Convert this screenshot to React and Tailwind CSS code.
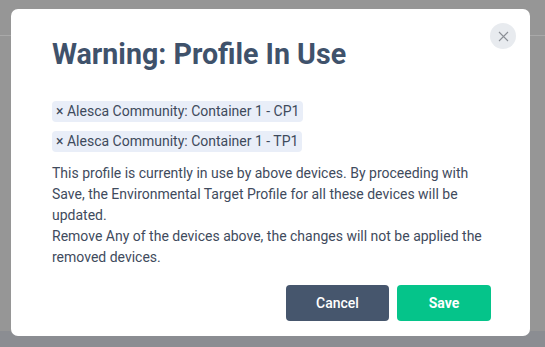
import React from 'react';

const devices = ['Alesca Community: Container 1 - CP1', 'Alesca Community: Container 1 - TP1'];

export default function App() {
  return (
    <div className="relative w-[545px] h-[347px] overflow-hidden bg-[#969696] font-['Roboto',sans-serif]">
      {/* page behind the overlay */}
      <div className="flex flex-col h-full">
        <div className="h-[35px]" />
        <div className="h-px bg-[#a9a9a9]" />
        <div className="flex-1" />
        <div className="h-[16px] bg-[#8b8d92]" />
      </div>

      <div className="absolute left-[11px] top-[9px] w-[519px] h-[327px] bg-white rounded-[7px] pl-[41px] pr-[14px] pt-[14px]">
        <div className="flex items-start justify-between">
          <h1 className="mt-[13px] text-[28.6px] leading-[36px] font-bold text-[#3f526b]">
            Warning: Profile In Use
          </h1>
          <button className="w-[26px] h-[26px] rounded-full bg-[#e8ebef] flex items-center justify-center">
            <svg width="11" height="11" viewBox="0 0 11 11" stroke="#8b8f96" strokeWidth="1.1">
              <path d="M1 1L10 10M10 1L1 10" />
            </svg>
          </button>
        </div>

        <div className="mt-[29px] flex flex-col items-start gap-[9px]">
          {devices.map((d) => (
            <span
              key={d}
              className="h-[21px] px-[4px] rounded-[4px] bg-[#e9eef8] text-[14px] leading-[21px] text-[#3e4a5c]"
            >
              × {d}
            </span>
          ))}
        </div>

        <p className="mt-[11px] w-[440px] text-[14px] leading-[21px] text-[#3f4b5d]">
          This profile is currently in use by above devices. By proceeding with Save, the Environmental Target Profile for all these devices will be updated.
          <br />
          Remove Any of the devices above, the changes will not be applied the removed devices.
        </p>

        <div className="mt-[17px] flex justify-end gap-[8px] pr-[25px]">
          <button className="w-[103px] h-[36px] rounded-[4px] bg-[#46566d] text-white text-[14px] font-medium">
            Cancel
          </button>
          <button className="w-[94px] h-[36px] rounded-[4px] bg-[#05c48a] text-white text-[14px] font-bold">
            Save
          </button>
        </div>
      </div>
    </div>
  );
}
